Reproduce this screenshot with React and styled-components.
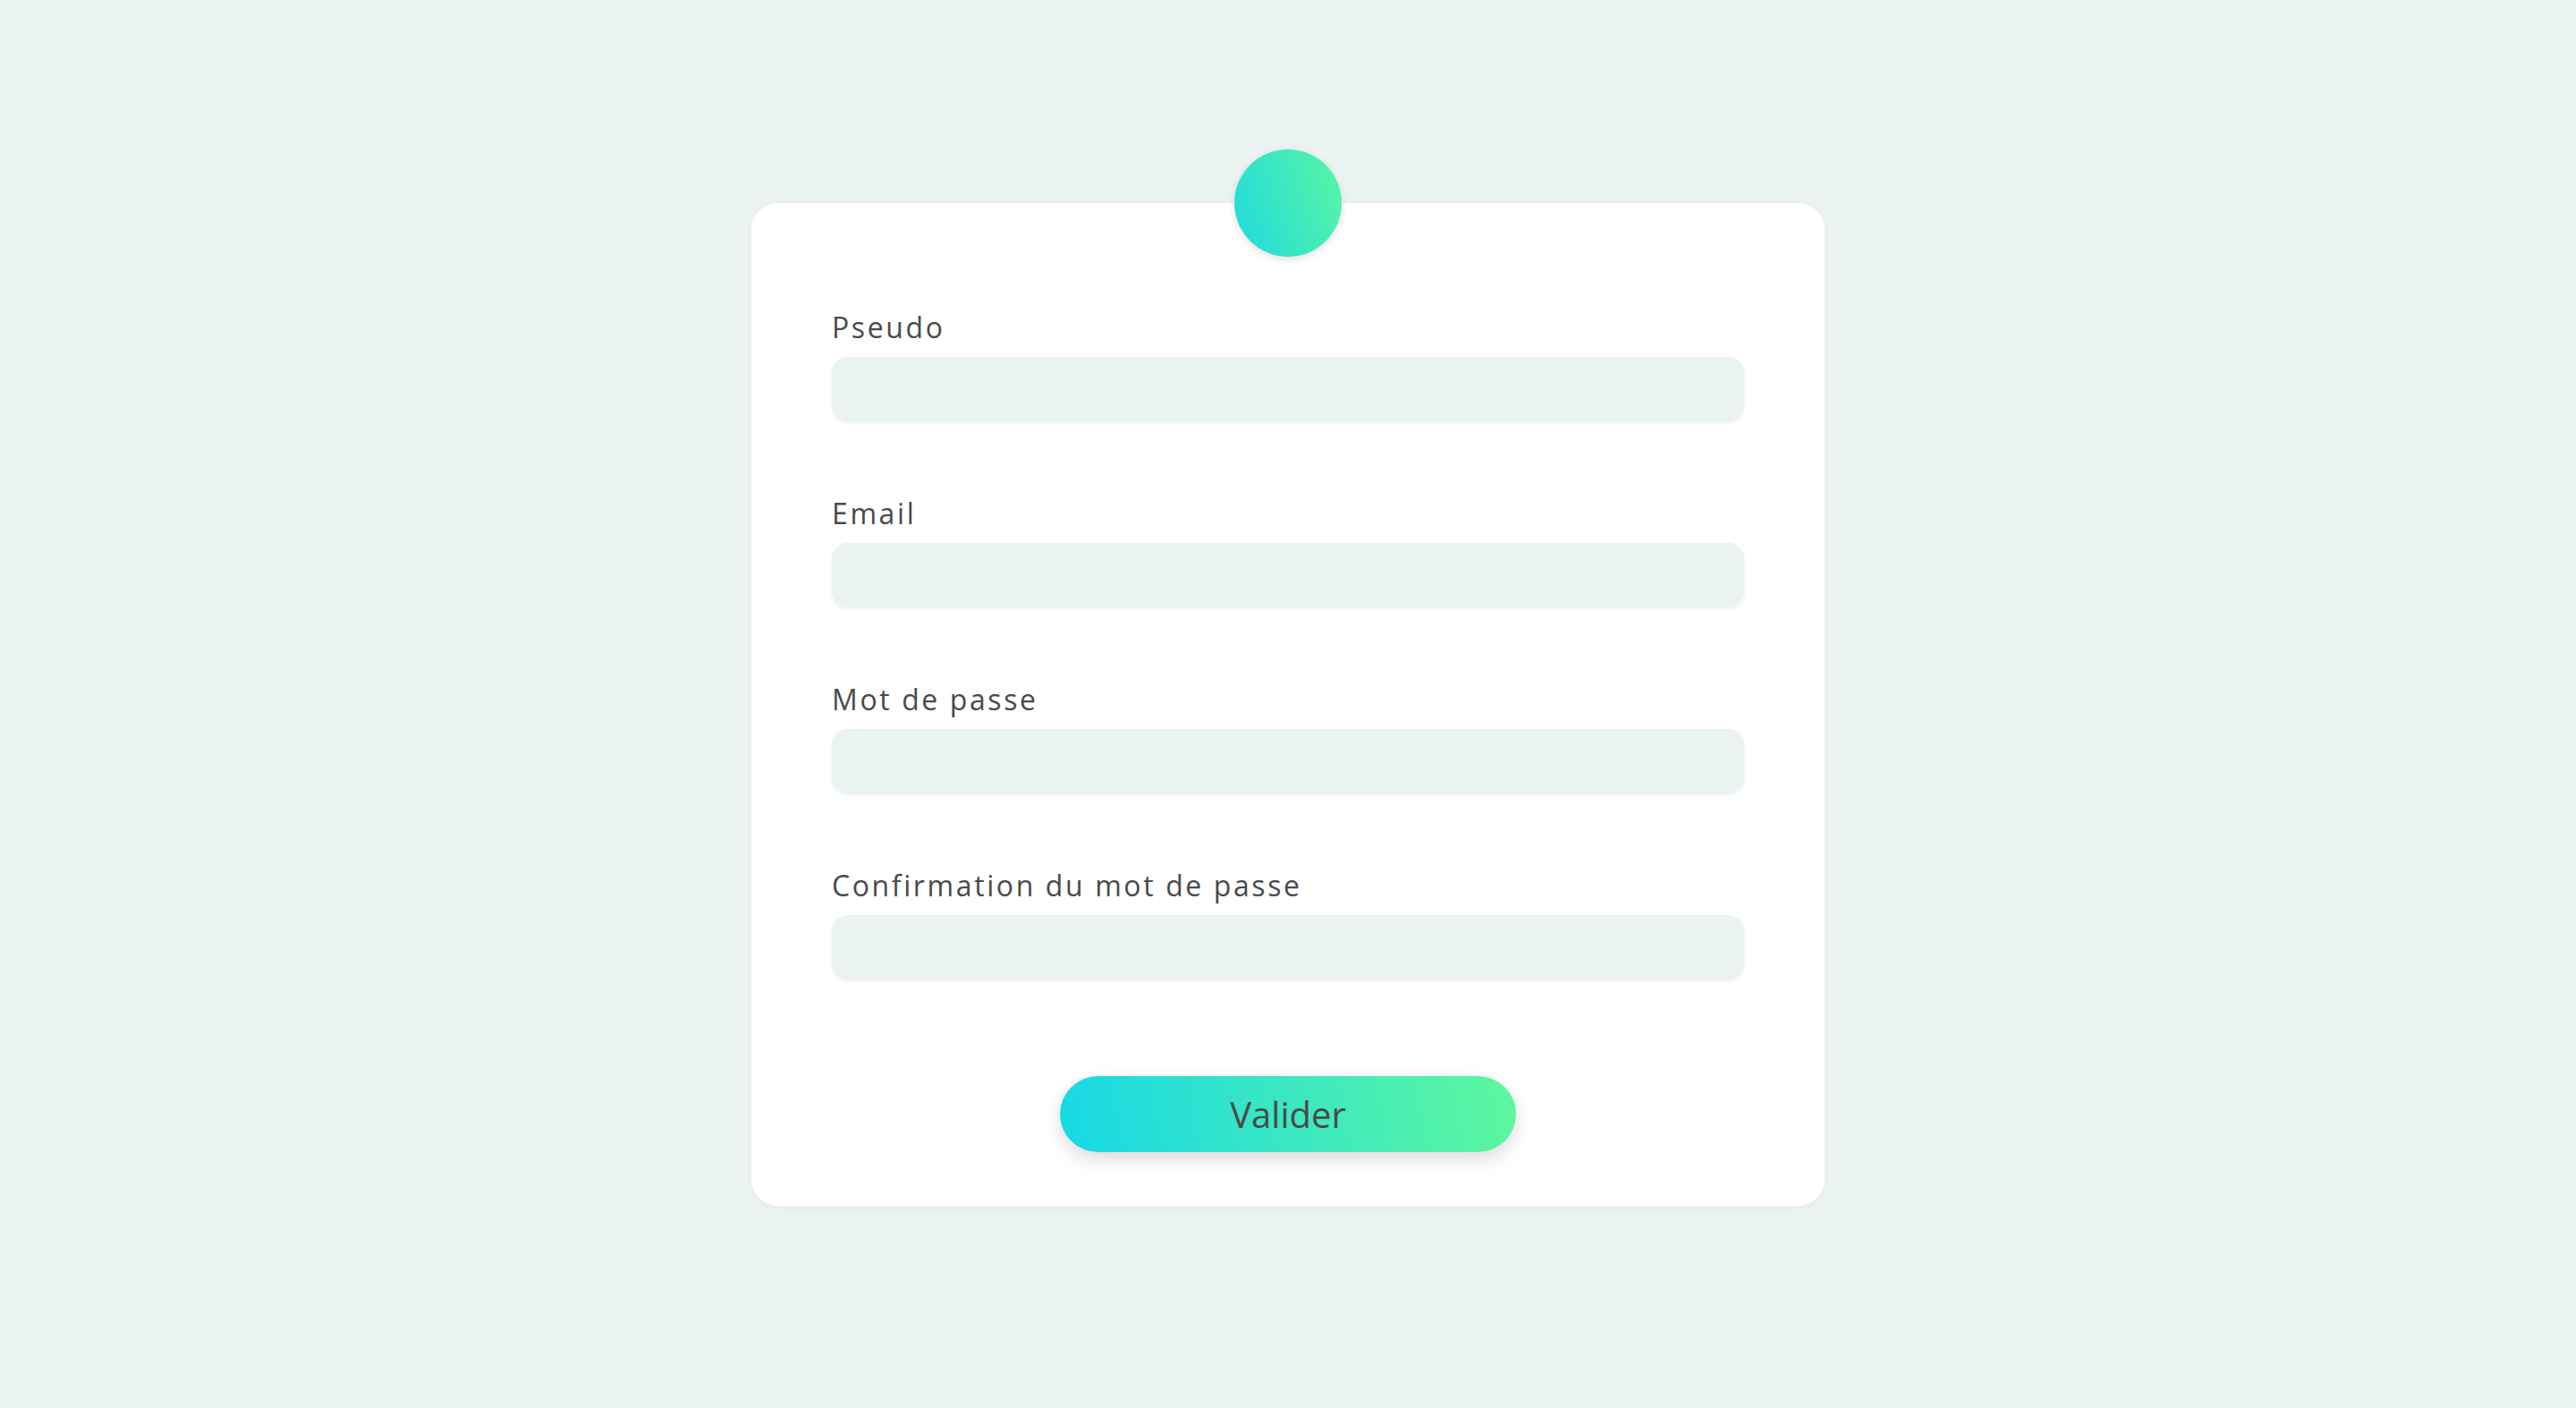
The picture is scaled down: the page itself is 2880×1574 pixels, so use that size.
import React from "react";
import styled, { createGlobalStyle } from "styled-components";

const GlobalStyle = createGlobalStyle`
  html, body {
    margin: 0;
    padding: 0;
    background: #eaf3f2;
    font-family: "Open Sans", "Noto Sans", sans-serif;
  }
  * { box-sizing: border-box; }
`;

const Page = styled.main`
  min-height: 1574px;
  display: flex;
  align-items: center;
  justify-content: center;
`;

const Card = styled.form`
  position: relative;
  width: 1200px;
  background: #ffffff;
  border-radius: 30px;
  padding: 119px 90px 60px;
  box-shadow: 0 2px 10px rgba(0, 0, 0, 0.03);
  display: flex;
  flex-direction: column;
`;

const Badge = styled.div`
  position: absolute;
  top: 0;
  left: 50%;
  width: 120px;
  height: 120px;
  border-radius: 50%;
  transform: translate(-50%, -50%);
  background: linear-gradient(70deg, #1fdade 0%, #5bf6a2 100%);
  box-shadow: 0 3px 8px rgba(0, 0, 0, 0.12);
`;

const Fields = styled.div`
  display: flex;
  flex-direction: column;
  gap: 83px;
`;

const Field = styled.div`
  display: flex;
  flex-direction: column;
  gap: 13px;
`;

const Label = styled.label`
  font-size: 32px;
  line-height: 40px;
  height: 40px;
  letter-spacing: 2.6px;
  color: #4a4a4a;
`;

const Input = styled.input`
  width: 100%;
  height: 72px;
  border: none;
  outline: none;
  border-radius: 18px;
  background: #eaf3f2;
  box-shadow: 0 2px 4px rgba(0, 0, 0, 0.06);
  padding: 0 24px;
  font-family: inherit;
  font-size: 30px;
  color: #4a4a4a;
`;

const Actions = styled.div`
  display: flex;
  justify-content: center;
  margin-top: 108px;
`;

const Submit = styled.button`
  width: 510px;
  height: 85px;
  border: none;
  border-radius: 43px;
  background: linear-gradient(80deg, #17d8e6 0%, #5ef79e 100%);
  box-shadow: 0 8px 20px rgba(0, 0, 0, 0.14);
  font-family: "Open Sans", "Noto Sans", sans-serif;
  font-size: 40px;
  line-height: 85px;
  color: #4a4a4a;
  padding: 0;
  cursor: pointer;
`;

const fields = [
  { id: "pseudo", label: "Pseudo", type: "text" },
  { id: "email", label: "Email", type: "email" },
  { id: "password", label: "Mot de passe", type: "password" },
  { id: "confirm", label: "Confirmation du mot de passe", type: "password" },
];

export default function App() {
  return (
    <>
      <GlobalStyle />
      <Page>
        <Card onSubmit={(e) => e.preventDefault()}>
          <Badge />
          <Fields>
            {fields.map((f) => (
              <Field key={f.id}>
                <Label htmlFor={f.id}>{f.label}</Label>
                <Input id={f.id} type={f.type} />
              </Field>
            ))}
          </Fields>
          <Actions>
            <Submit type="submit">Valider</Submit>
          </Actions>
        </Card>
      </Page>
    </>
  );
}
